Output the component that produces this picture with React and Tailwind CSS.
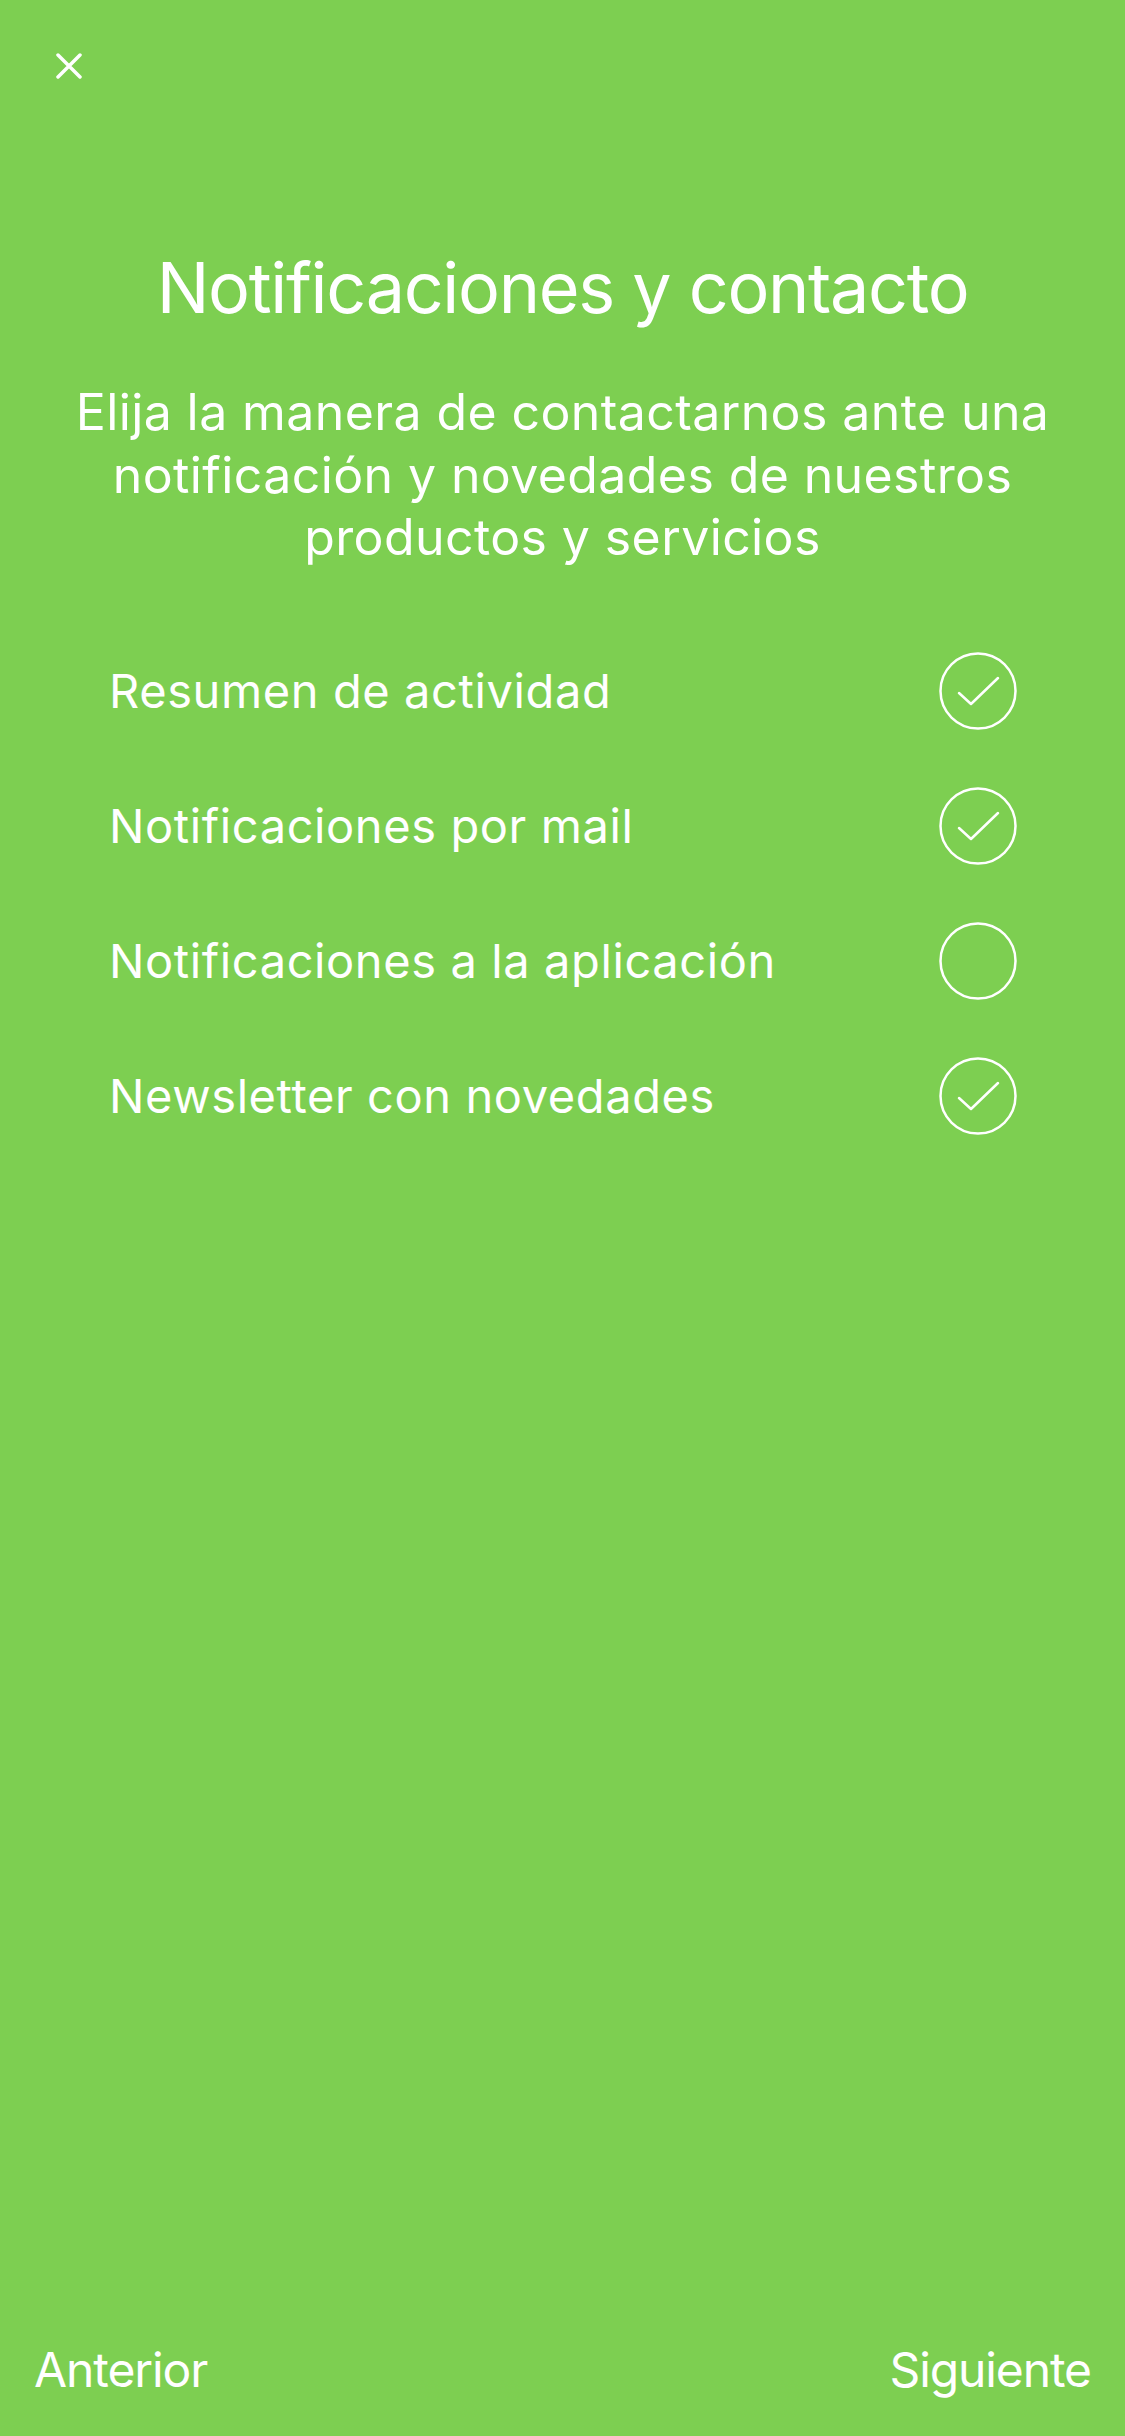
import { useState } from 'react'

const options = [
    { id: 'resumen', label: 'Resumen de actividad', on: true },
    { id: 'mail', label: 'Notificaciones por mail', on: true },
    { id: 'app', label: 'Notificaciones a la aplicación', on: false },
    { id: 'newsletter', label: 'Newsletter con novedades', on: true },
]

function CheckCircle({ checked }) {
    return (
        <svg width="78" height="78" viewBox="0 0 78 78" fill="none">
            <circle cx="39" cy="39" r="37.5" stroke="white" strokeWidth="2.5" />
            {checked && <path d="M20 41 L32 52 L59 26" stroke="white" strokeWidth="2.5" strokeLinecap="round" strokeLinejoin="round" />}
        </svg>
    )
}

export default function App() {
    const [values, setValues] = useState(options.map((o) => o.on))

    function toggle(i) {
        setValues(values.map((v, j) => (j === i ? !v : v)))
    }

    return (
        <div className="min-h-screen bg-[#7dcf51] text-white flex flex-col" style={{ fontFamily: 'Inter, "Noto Sans", sans-serif' }}>
            <div className="pt-[53px] pl-[56px]">
                <button className="block" aria-label="Cerrar">
                    <svg width="26" height="26" viewBox="0 0 26 26" fill="none">
                        <path d="M2 2 L24 24 M24 2 L2 24" stroke="white" strokeWidth="3.5" strokeLinecap="round" />
                    </svg>
                </button>
            </div>

            <h1 className="mt-[167px] text-center text-[70px] leading-[84px] font-normal tracking-[-1.3px]">Notificaciones y contacto</h1>

            <p className="mt-[51px] text-center text-[50px] leading-[62.5px] font-normal tracking-[0.4px]">
                Elija la manera de contactarnos ante una<br />
                notificación y novedades de nuestros<br />
                productos y servicios
            </p>

            <div className="mt-[55px] pl-[109px] pr-[108px] flex flex-col">
                {options.map((o, i) => (
                    <div key={o.id} className="h-[135px] flex items-center justify-between" onClick={() => toggle(i)}>
                        <span className="text-[47px] leading-[60px] font-normal tracking-[0.6px]">{o.label}</span>
                        <CheckCircle checked={values[i]} />
                    </div>
                ))}
            </div>

            <div className="mt-auto px-[34px] pb-[36px] flex justify-between text-[48px] leading-[60px] font-normal tracking-[-1.1px]">
                <button>Anterior</button>
                <button>Siguiente</button>
            </div>
        </div>
    )
}
